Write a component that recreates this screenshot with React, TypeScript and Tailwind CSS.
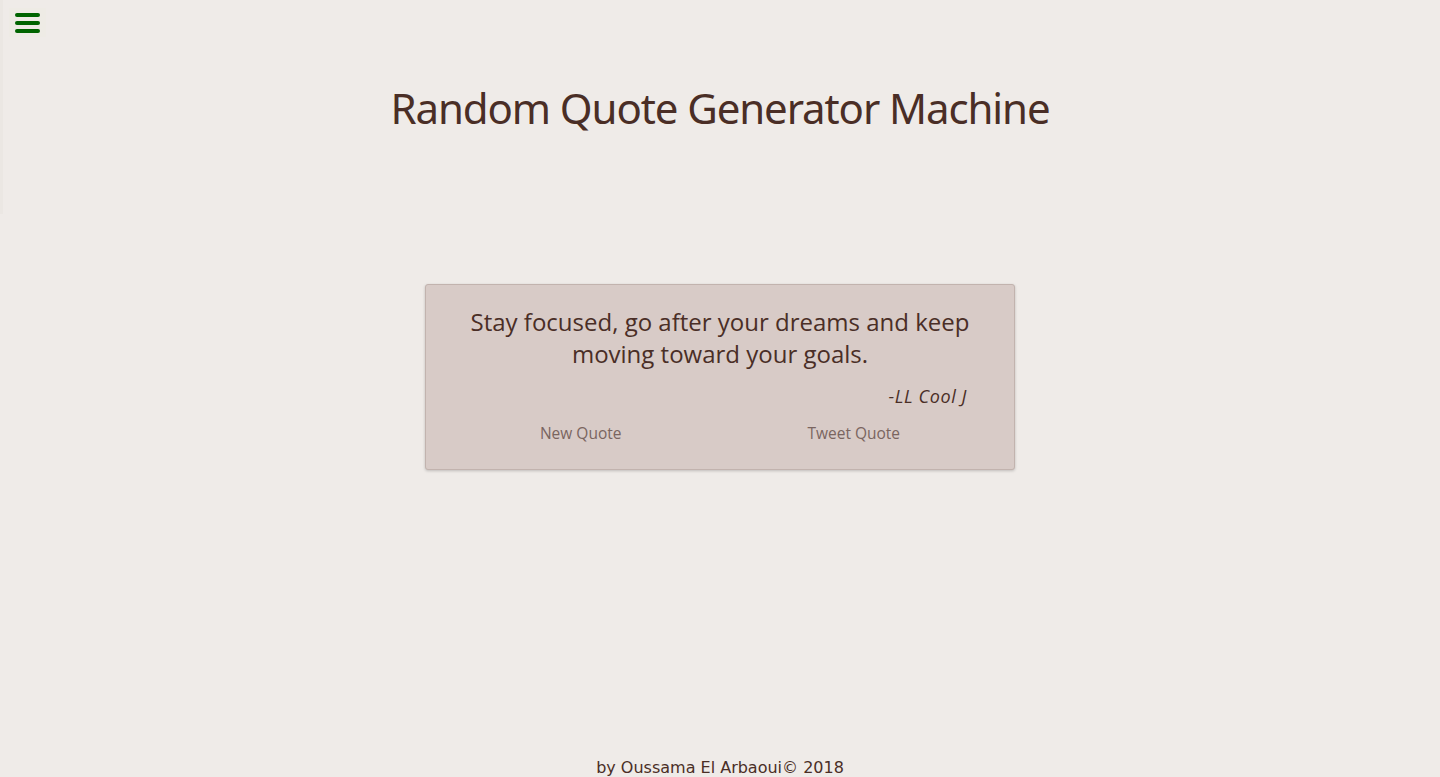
import React from "react";

const App: React.FC = () => {
  return (
    <div className="min-h-screen bg-[#efebe8] flex flex-col relative">
      <div className="absolute left-0 top-0 h-[214px] w-[3px] bg-[#ebe7e3]" />
      <button className="absolute left-[9px] top-[8px] w-[37px] h-[29px] bg-[#eeebe5] flex flex-col items-center justify-center gap-[4px]">
        <span className="block w-[25px] h-[4px] rounded-full bg-[#006400]" />
        <span className="block w-[25px] h-[4px] rounded-full bg-[#006400]" />
        <span className="block w-[25px] h-[4px] rounded-full bg-[#006400]" />
      </button>

      <h1 className="mt-[80px] text-center text-[42px] leading-[56px] text-[#4a2e26] font-['Noto_Sans',sans-serif] tracking-[-1.1px]">
        Random Quote Generator Machine
      </h1>

      <div className="mt-[148px] mx-auto w-[590px] h-[186px] bg-[#d8cbc7] border border-[#c2b3ae] rounded-[3px] shadow-[0_1px_3px_rgba(0,0,0,0.2)] pt-[21px] font-['Open_Sans',sans-serif]">
        <p className="px-[40px] text-center text-[24px] leading-[32px] text-[#4a2e26]">
          Stay focused, go after your dreams and keep moving toward your goals.
        </p>
        <p className="mt-[14px] pr-[47px] text-right text-[18px] leading-[24px] tracking-[0.6px] italic text-[#4a2e26]">-LL Cool J</p>
        <div className="mt-[14px] flex justify-center gap-[186px]">
          <button className="text-[15.5px] text-[#7a6560]">New Quote</button>
          <button className="text-[15.5px] text-[#7a6560]">Tweet Quote</button>
        </div>
      </div>

      <footer className="mt-auto text-center text-[16px] leading-[20px] text-[#4a2e26] font-['DejaVu_Sans',sans-serif] translate-y-[1px]">
        by Oussama El Arbaoui© 2018
      </footer>
    </div>
  );
};

export default App;
